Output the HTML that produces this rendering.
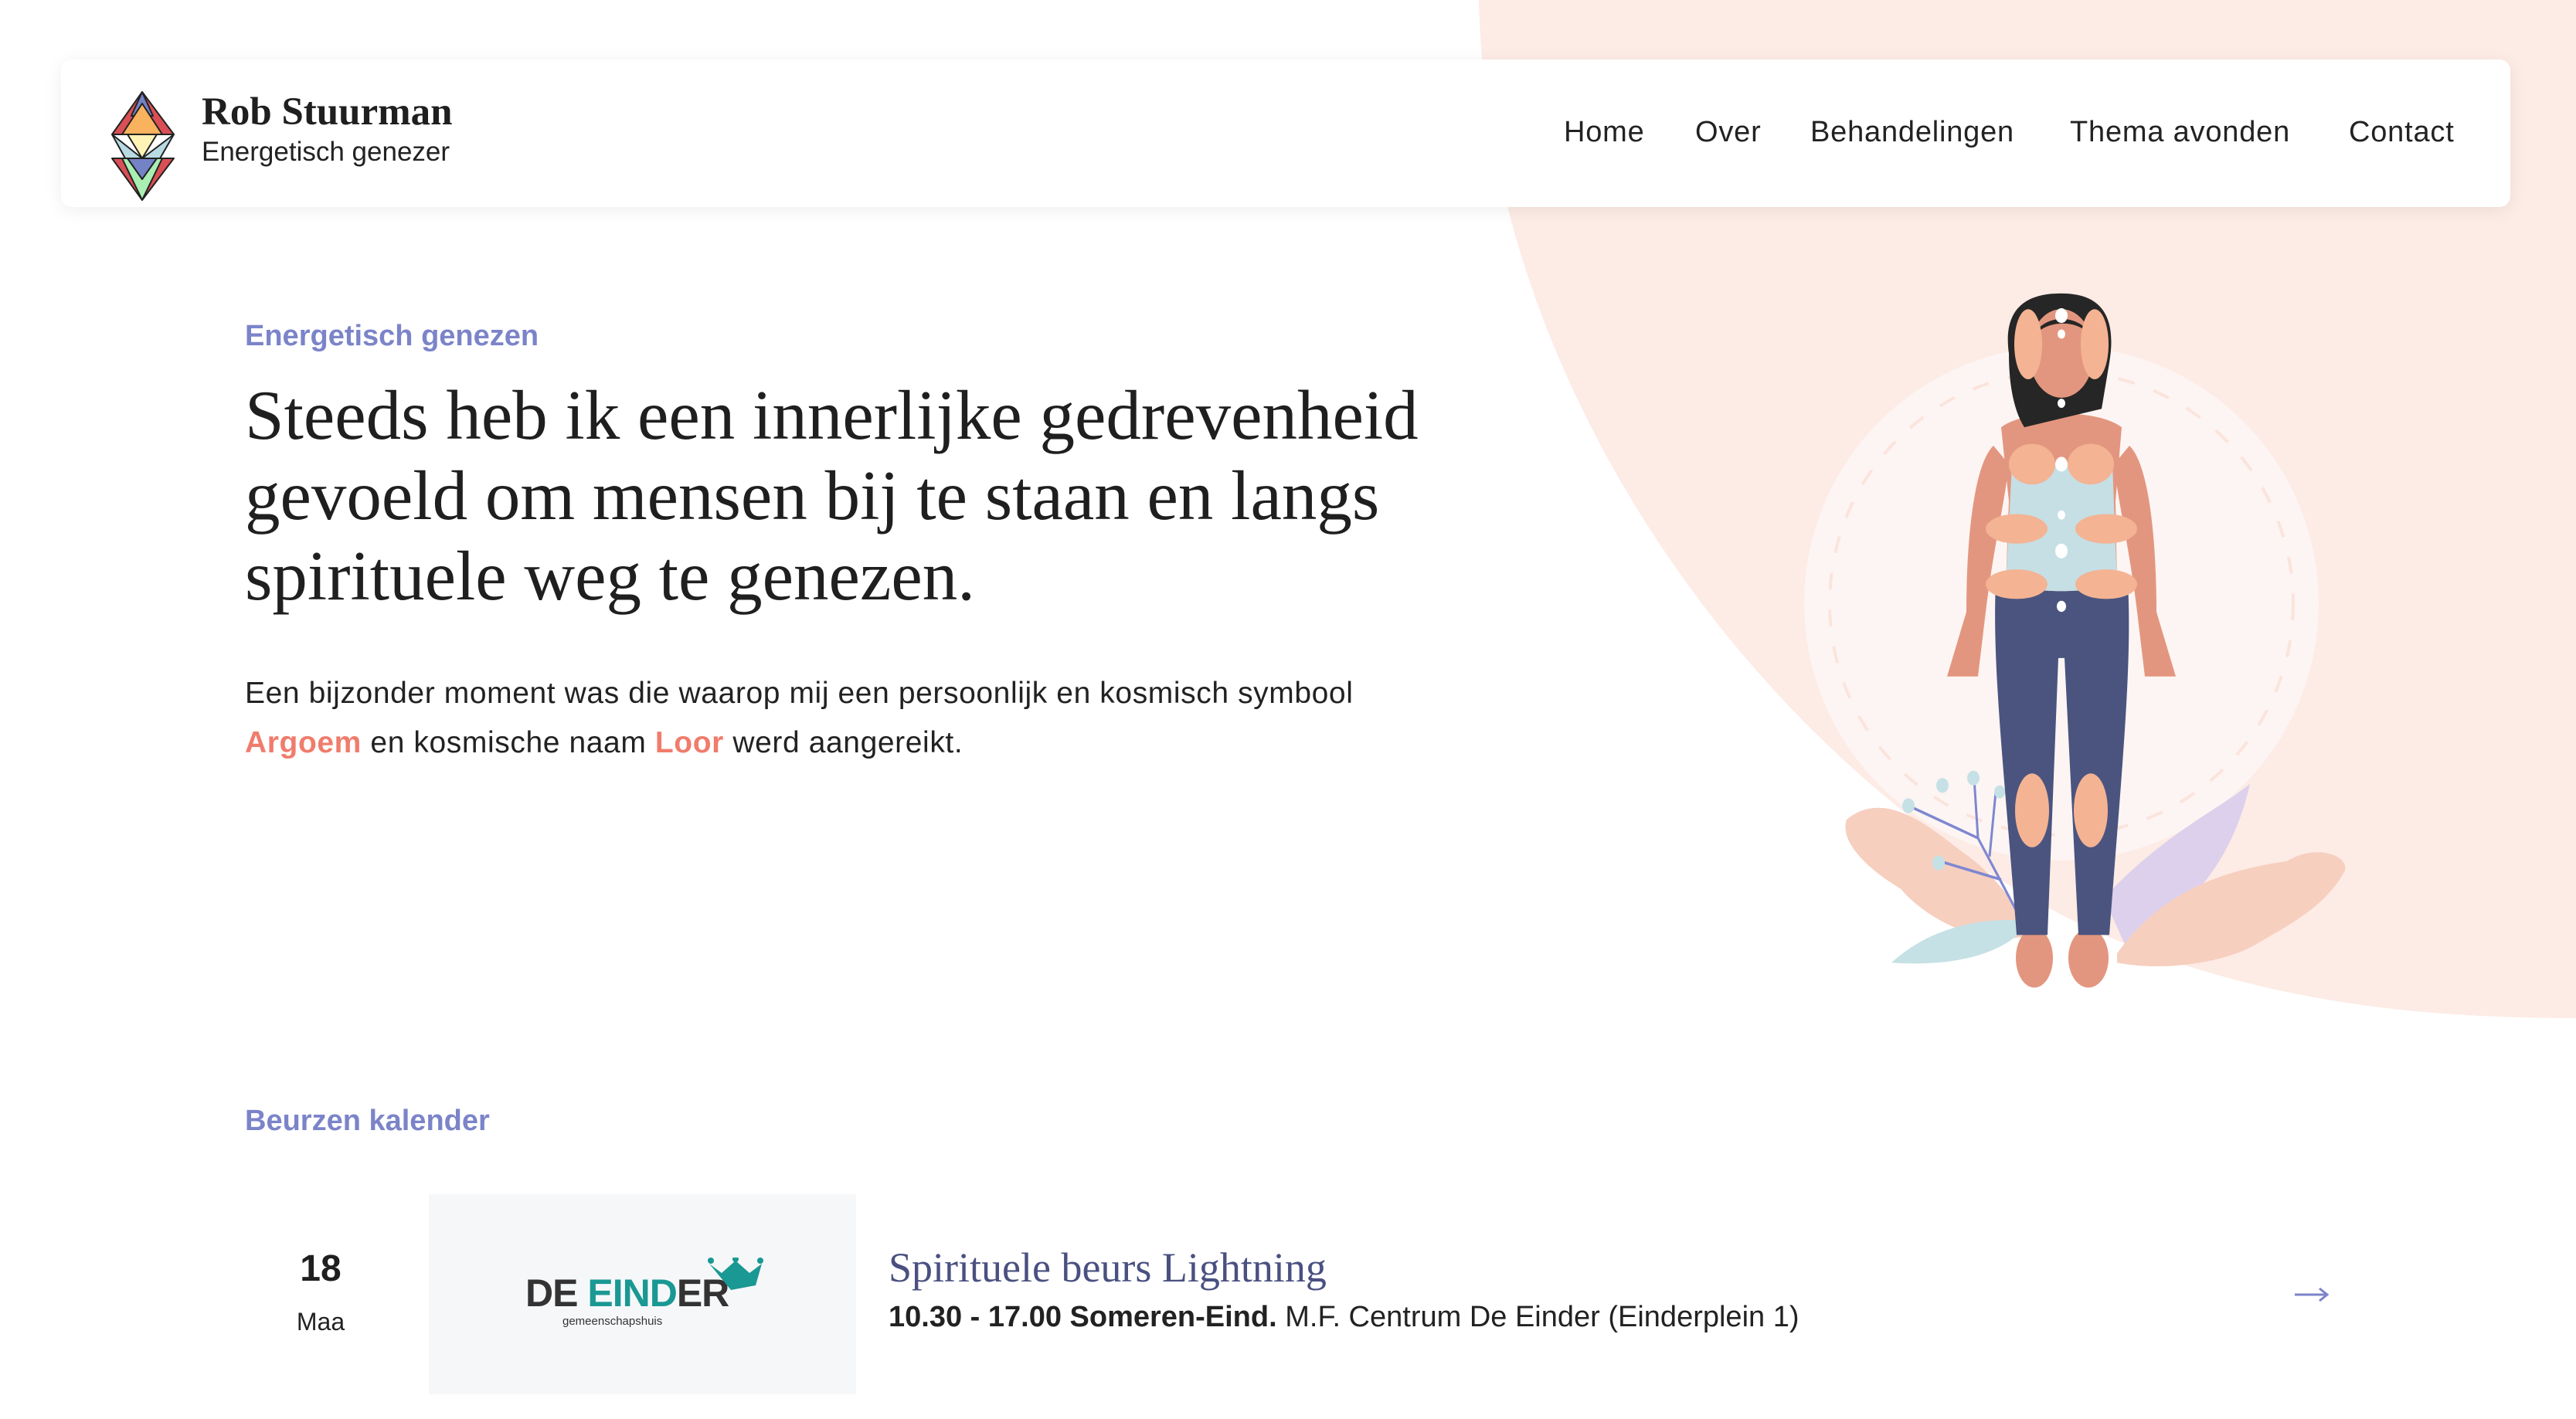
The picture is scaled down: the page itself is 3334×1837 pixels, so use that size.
<!DOCTYPE html>
<html><head><meta charset="utf-8">
<style>
*{margin:0;padding:0;box-sizing:border-box}
body{width:3334px;height:1837px;position:relative;overflow:hidden;background:#fff;font-family:"Liberation Sans",sans-serif;color:#222}
.abs{position:absolute;white-space:nowrap}
#bg{position:absolute;left:0;top:0}
.nav{position:absolute;left:79px;top:77px;width:3170px;height:191px;background:#fff;border-radius:14px;box-shadow:0 4px 24px rgba(0,0,0,.07)}
.navi{font-size:38px;color:#222;top:150px;letter-spacing:.8px}
.serif{font-family:"Liberation Serif",serif}
</style></head><body>
<svg id="bg" width="3334" height="1837" viewBox="0 0 3334 1837">
<path d="M1914 0 C1925 520 2300 1010 2700 1200 C2900 1290 3100 1318 3334 1318 L3334 0Z" fill="#fdebe5"/>
<circle cx="2668" cy="781" r="333" fill="#fdf5f3"/>
<circle cx="2668" cy="781" r="300" fill="none" stroke="#fbe4dc" stroke-width="4" stroke-dasharray="22 26"/>
<g transform="translate(0,350) scale(1,1.195) translate(0,-350)">
<path d="M2390 1075 C2440 1040 2500 1085 2540 1110 C2590 1140 2610 1170 2630 1200 C2560 1215 2490 1180 2460 1150 C2420 1130 2380 1100 2390 1075Z" fill="#f6cfbf" transform="translate(0,-130)"/>
<path d="M2723 1030 C2800 960 2880 930 2912 906 C2890 990 2830 1050 2750 1080Z" fill="#dcd0ec"/>
<path d="M2740 1090 C2800 1020 2880 1000 2960 990 C3000 970 3040 985 3035 1000 C3010 1040 2960 1060 2920 1080 C2880 1100 2800 1110 2740 1100Z" fill="#f6cfbf"/>
<path d="M2448 1100 C2500 1060 2570 1050 2627 1055 C2600 1090 2530 1105 2448 1100Z" fill="#c5e1e6"/>
<g stroke="#7e87d1" stroke-width="3" fill="none"><path d="M2620 1060 L2560 965 L2470 930"/><path d="M2560 965 L2555 900"/><path d="M2575 985 L2583 915"/><path d="M2590 1010 L2510 990"/></g>
<g fill="#c5e1e6"><circle cx="2470" cy="930" r="8"/><circle cx="2514" cy="908" r="8"/><circle cx="2554" cy="900" r="8"/><circle cx="2588" cy="915" r="7"/><circle cx="2509" cy="992" r="8"/></g>
<path d="M2580 540 C2555 560 2545 640 2545 720 L2520 790 L2560 790 L2570 720 C2580 650 2595 600 2600 560Z" fill="#e3967f"/>
<path d="M2756 540 C2781 560 2791 640 2791 720 L2816 790 L2776 790 L2766 720 C2756 650 2741 600 2736 560Z" fill="#e3967f"/>
<ellipse cx="2633" cy="1095" rx="24" ry="32" fill="#e3967f"/>
<ellipse cx="2703" cy="1095" rx="26" ry="32" fill="#e3967f"/>
<path d="M2583 689 L2754 689 C2760 780 2745 900 2730 1070 L2690 1070 L2672 770 L2664 770 L2650 1070 L2610 1070 C2595 900 2578 780 2583 689Z" fill="#4a547f"/>
<path d="M2590 520 C2620 500 2716 500 2746 520 L2738 600 L2740 690 C2700 700 2636 700 2596 690 L2600 600Z" fill="#e3967f"/>
<path d="M2604 560 L2734 560 L2740 690 C2700 700 2636 700 2596 690Z" fill="#c5dfe5"/>
<rect x="2648" y="470" width="40" height="50" fill="#e3967f"/>
<path d="M2600 440 C2590 380 2640 375 2668 375 C2720 375 2740 400 2730 450 L2720 500 L2620 520 C2605 500 2600 470 2600 440Z" fill="#262626"/>
<ellipse cx="2668" cy="440" rx="42" ry="48" fill="#e3967f"/>
<path d="M2626 430 C2640 400 2700 400 2712 430 C2700 395 2640 392 2626 430Z" fill="#262626"/>
<g fill="#f4b393">
<ellipse cx="2625" cy="430" rx="18" ry="38"/><ellipse cx="2711" cy="430" rx="18" ry="38"/>
<ellipse cx="2630" cy="560" rx="30" ry="22"/><ellipse cx="2706" cy="560" rx="30" ry="22"/>
<ellipse cx="2610" cy="630" rx="40" ry="16"/><ellipse cx="2726" cy="630" rx="40" ry="16"/>
<ellipse cx="2610" cy="690" rx="40" ry="16"/><ellipse cx="2726" cy="690" rx="40" ry="16"/>
<ellipse cx="2630" cy="935" rx="22" ry="40"/><ellipse cx="2706" cy="935" rx="22" ry="40"/>
</g>
<g fill="#fff"><circle cx="2668" cy="399" r="8"/><circle cx="2668" cy="419" r="5"/><circle cx="2668" cy="494" r="5"/><circle cx="2668" cy="560" r="8"/><circle cx="2668" cy="615" r="5"/><circle cx="2668" cy="654" r="8"/><circle cx="2668" cy="714" r="6"/></g>
</g>
</svg>

<div class="nav"></div>
<svg class="abs" style="left:140px;top:112px" width="92" height="150" viewBox="140 112 92 150">
<g stroke="#222" stroke-width="2" stroke-linejoin="round">
<polygon points="184,119 145,174 225,174" fill="#d94f55"/>
<polygon points="184,119 170,150 198,150" fill="#7482c6"/>
<polygon points="158,174 184,134 210,174" fill="#f9b25d"/>
<polygon points="145,174 184,205 225,174 184,245" fill="#b8dbe3"/>
<polygon points="165,174 203,174 184,205" fill="#fff3b5"/>
<polygon points="145,205 225,205 184,259" fill="#d94f55"/>
<polygon points="158,205 210,205 184,259" fill="#a9efb2"/>
<polygon points="165,205 203,205 184,232" fill="#7482c6"/>
</g></svg>
<div class="abs serif" style="left:261px;top:116px;font-size:51px;font-weight:bold;color:#1f1f1f">Rob Stuurman</div>
<div class="abs" style="left:261px;top:177px;font-size:35px;color:#222">Energetisch genezer</div>
<div class="abs navi" style="left:2024px">Home</div>
<div class="abs navi" style="left:2194px">Over</div>
<div class="abs navi" style="left:2343px">Behandelingen</div>
<div class="abs navi" style="left:2679px">Thema avonden</div>
<div class="abs navi" style="left:3040px">Contact</div>

<div class="abs" style="left:317px;top:414px;font-size:38px;font-weight:bold;color:#7b84c9">Energetisch genezen</div>
<div class="abs serif" style="left:317px;top:486px;font-size:91px;line-height:104px;color:#1f1f1f">Steeds heb ik een innerlijke gedrevenheid<br>gevoeld om mensen bij te staan en langs<br>spirituele weg te genezen.</div>
<div class="abs" style="left:317px;top:866px;font-size:39px;line-height:64px;color:#222;letter-spacing:.6px">Een bijzonder moment was die waarop mij een persoonlijk en kosmisch symbool<br><b style="color:#f07c6c">Argoem</b> en kosmische naam <b style="color:#f07c6c">Loor</b> werd aangereikt.</div>

<div class="abs" style="left:317px;top:1430px;font-size:38px;font-weight:bold;color:#7b84c9">Beurzen kalender</div>
<div class="abs" style="left:355px;top:1615px;width:120px;text-align:center;font-size:48px;font-weight:bold;color:#1f1f1f">18</div>
<div class="abs" style="left:355px;top:1693px;width:120px;text-align:center;font-size:32px;color:#222">Maa</div>
<div class="abs" style="left:555px;top:1546px;width:553px;height:259px;background:#f6f7f9"></div>
<div class="abs" style="left:680px;top:1645px;font-size:50px;font-weight:bold;color:#333;letter-spacing:-1px">DE <span style="color:#1a9893">EIND</span>ER</div>
<div class="abs" style="left:728px;top:1702px;font-size:15px;color:#333">gemeenschapshuis</div>
<svg class="abs" style="left:912px;top:1628px" width="80" height="50" viewBox="0 0 80 50"><path d="M6 8 L22 20 L40 4 L58 20 L74 8 L66 36 L34 42 Z" fill="#1a9893"/><circle cx="8" cy="4" r="4" fill="#1a9893"/><circle cx="40" cy="2" r="4" fill="#1a9893"/><circle cx="72" cy="4" r="4" fill="#1a9893"/></svg>
<div class="abs serif" style="left:1150px;top:1610px;font-size:54px;color:#4a5080">Spirituele beurs Lightning</div>
<div class="abs" style="left:1150px;top:1684px;font-size:38px;color:#222"><b>10.30 - 17.00 Someren-Eind.</b> M.F. Centrum De Einder (Einderplein 1)</div>
<svg class="abs" style="left:2968px;top:1665px" width="48" height="22" viewBox="0 0 48 22"><path d="M2 11 H44 M34 3 L44 11 L34 19" stroke="#7b84c9" stroke-width="3" fill="none"/></svg>
</body></html>
